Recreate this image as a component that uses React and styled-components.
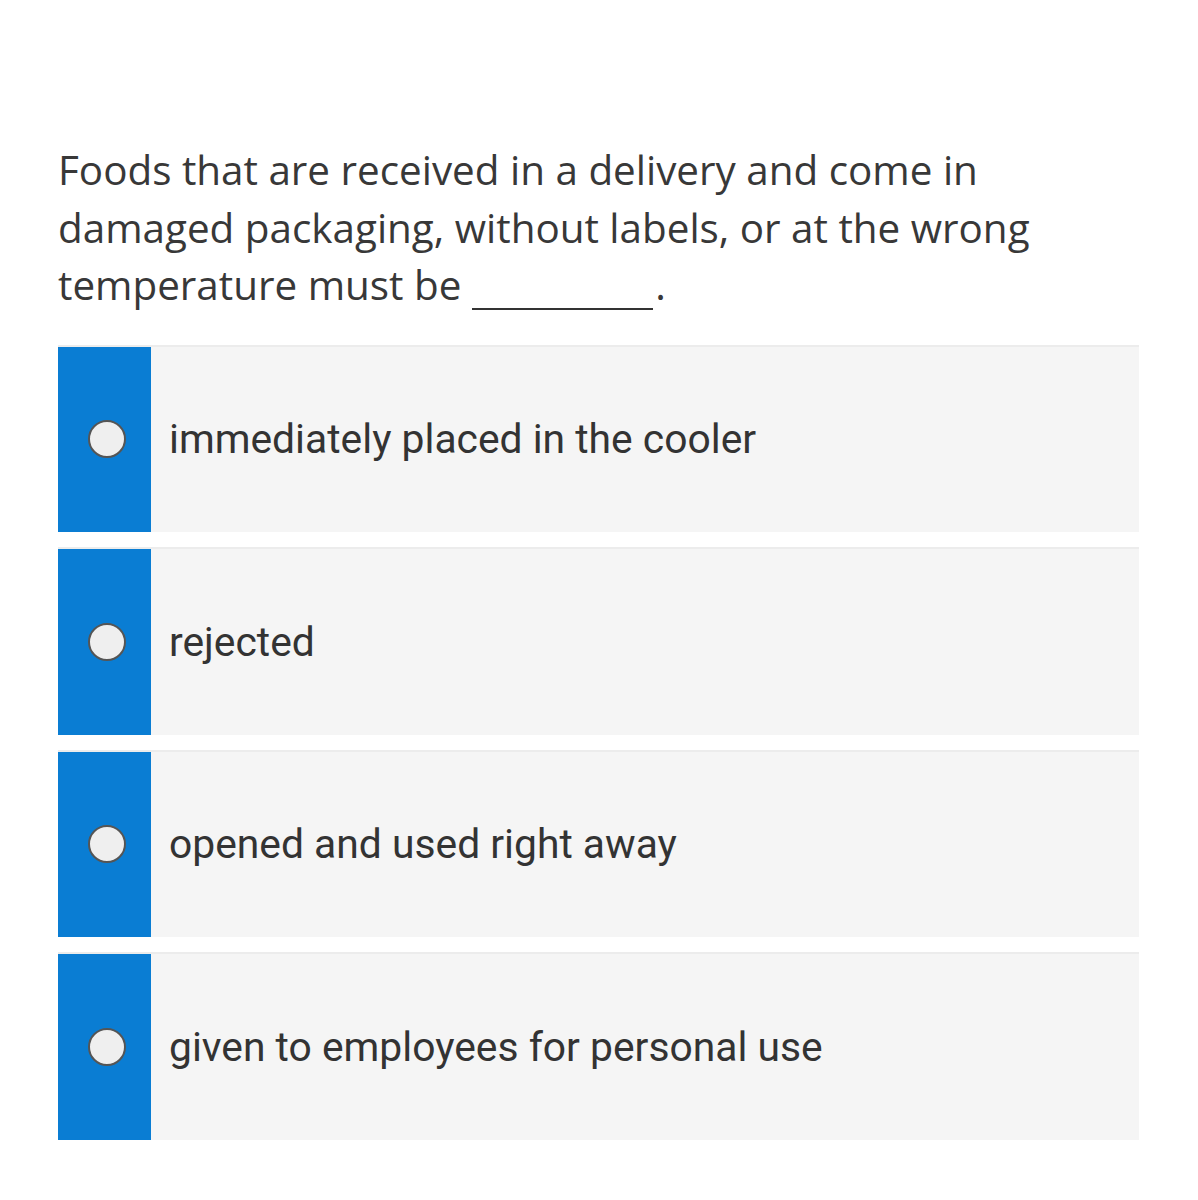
import React from "react";
import styled, { createGlobalStyle } from "styled-components";

const GlobalStyle = createGlobalStyle`
  html, body {
    margin: 0;
    padding: 0;
    background: #fff;
  }
`;

const Page = styled.div`
  width: 1198px;
  min-height: 1200px;
  box-sizing: border-box;
  padding: 141px 59px 0 58px;
`;

const Question = styled.p`
  margin: 0 0 31px;
  font-family: "Open Sans", sans-serif;
  font-size: 40.4px;
  line-height: 57.5px;
  color: #383838;
`;

const Blank = styled.span`
  display: inline-block;
  width: 181px;
  height: 20px;
  margin: 0 2px 0 11px;
  border-bottom: 2.5px solid #333;
  vertical-align: -10px;
`;

const Options = styled.div`
  display: flex;
  flex-direction: column;
  gap: 15px;
`;

const Option = styled.label`
  display: flex;
  box-sizing: border-box;
  height: 187.5px;
  border-top: 2.5px solid #ececec;
  background: #f5f5f5;
  cursor: pointer;
`;

const Handle = styled.div`
  flex: 0 0 93px;
  display: flex;
  align-items: center;
  justify-content: center;
  background: #0a7dd3;
`;

const Radio = styled.span`
  width: 34px;
  height: 34px;
  margin-left: 4px;
  border-radius: 50%;
  border: 2.5px solid #555;
  background: #efefef;
`;

const OptionText = styled.span`
  display: flex;
  align-items: center;
  padding-left: 18px;
  font-family: Roboto, sans-serif;
  font-size: 40.8px;
  color: #333;
`;

const options = [
  "immediately placed in the cooler",
  "rejected",
  "opened and used right away",
  "given to employees for personal use",
];

export default function App() {
  return (
    <Page>
      <GlobalStyle />
      <Question>
        Foods that are received in a delivery and come in damaged packaging, without labels, or at the wrong
        temperature must be<Blank />.
      </Question>
      <Options>
        {options.map(o => (
          <Option key={o}>
            <Handle>
              <Radio />
            </Handle>
            <OptionText>{o}</OptionText>
          </Option>
        ))}
      </Options>
    </Page>
  );
}
